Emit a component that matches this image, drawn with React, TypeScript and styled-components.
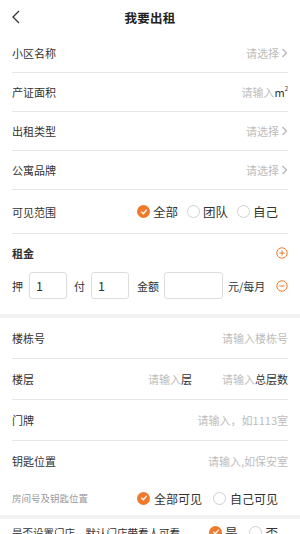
import React, { useState } from 'react';
import styled, { createGlobalStyle } from 'styled-components';

const GlobalStyle = createGlobalStyle`
    html, body {
        margin: 0;
        padding: 0;
        background: #ffffff;
    }
    body {
        font-family: "Noto Sans CJK SC", "Noto Sans", sans-serif;
        color: #333333;
    }
`;

const ORANGE = '#f07a2c';

const Page = styled.div`
    width: 300px;
    height: 534px;
    overflow: hidden;
    background: #ffffff;
`;

const Header = styled.div`
    height: 34px;
    display: flex;
    align-items: center;
    justify-content: center;
    position: relative;
`;

const BackButton = styled.div`
    position: absolute;
    left: 12px;
    top: 9px;
    width: 10px;
    height: 15px;
    display: flex;
    align-items: center;
`;

const Title = styled.h1`
    margin: 0;
    font-size: 12.5px;
    font-weight: 700;
    color: #222222;
    letter-spacing: 0.2px;
`;

const Section = styled.div`
    padding: 0 12px;
`;

const Row = styled.div<{ h?: number; noLine?: boolean }>`
    height: ${(p) => p.h ?? 38}px;
    display: flex;
    align-items: center;
    justify-content: space-between;
    border-bottom: ${(p) => (p.noLine ? 'none' : '1px solid #e6e6e6')};
`;

const Label = styled.span<{ bold?: boolean }>`
    font-size: 11px;
    color: #333333;
    font-weight: ${(p) => (p.bold ? 700 : 400)};
`;

const SubLabel = styled.span<{ dark?: boolean }>`
    font-size: ${(p) => (p.dark ? 10.5 : 9.5)}px;
    color: ${(p) => (p.dark ? '#333333' : '#999999')};
`;

const Value = styled.span`
    display: flex;
    align-items: center;
    font-size: 11px;
    color: #bdbdbd;
`;

const Dark = styled.span`
    color: #333333;
`;

const Sup = styled.sup`
    font-size: 6px;
    position: relative;
    top: -1px;
`;

const Split = styled.div`
    display: flex;
    gap: 30px;
`;

const Chevron = () => (
    <svg width="7" height="10" viewBox="0 0 7 10" style={{ marginLeft: 2 }}>
        <polyline points="1.5,1 5.5,5 1.5,9" fill="none" stroke="#b5b5b5" strokeWidth="1.2" />
    </svg>
);

const RadioGroup = styled.div<{ gap: number }>`
    display: flex;
    align-items: center;
    gap: ${(p) => p.gap}px;
    margin-right: 10px;
`;

const RadioItem = styled.label<{ size: number; space: number }>`
    display: flex;
    align-items: center;
    gap: ${(p) => p.space}px;
    font-size: ${(p) => p.size}px;
    color: #333333;
`;

const Dot = styled.span<{ on: boolean; d: number }>`
    width: ${(p) => p.d}px;
    height: ${(p) => p.d}px;
    box-sizing: border-box;
    border-radius: 50%;
    display: flex;
    align-items: center;
    justify-content: center;
    background: ${(p) => (p.on ? ORANGE : '#ffffff')};
    border: ${(p) => (p.on ? 'none' : '1px solid #cfcfcf')};
`;

const Radio = ({ on, text, d = 13, size = 12.5, space = 3 }: { on: boolean; text: string; d?: number; size?: number; space?: number }) => (
    <RadioItem size={size} space={space}>
        <Dot on={on} d={d}>
            {on && (
                <svg width={d * 0.6} height={d * 0.6} viewBox="0 0 10 10">
                    <polyline points="2,5.2 4.3,7.4 8.2,2.8" fill="none" stroke="#fff" strokeWidth="1.6" strokeLinecap="round" strokeLinejoin="round" />
                </svg>
            )}
        </Dot>
        {text}
    </RadioItem>
);

const CircleIcon = ({ plus }: { plus?: boolean }) => (
    <svg width="12" height="12" viewBox="0 0 12 12">
        <circle cx="6" cy="6" r="5.2" fill="none" stroke={ORANGE} strokeWidth="1" />
        <line x1="3.4" y1="6" x2="8.6" y2="6" stroke={ORANGE} strokeWidth="1" />
        {plus && <line x1="6" y1="3.4" x2="6" y2="8.6" stroke={ORANGE} strokeWidth="1" />}
    </svg>
);

const RentBlock = styled.div`
    padding: 0 12px 15px;
`;

const RentHead = styled.div`
    height: 38px;
    display: flex;
    align-items: center;
    justify-content: space-between;
`;

const RentLine = styled.div`
    display: flex;
    align-items: center;
    height: 27px;
`;

const Small = styled.span<{ ml?: number }>`
    font-size: 11px;
    color: #333333;
    margin-left: ${(p) => p.ml ?? 0}px;
`;

const Box = styled.div<{ w: number; ml: number }>`
    width: ${(p) => p.w}px;
    height: 27px;
    margin-left: ${(p) => p.ml}px;
    box-sizing: border-box;
    border: 1px solid #dedede;
    border-radius: 3px;
    font-size: 12.5px;
    color: #333333;
    display: flex;
    align-items: center;
    padding-left: 6px;
`;

const Spacer = styled.div`
    flex: 1;
`;

const Gap = styled.div`
    height: 4px;
    background: #f2f2f2;
`;

const KeyBlock = styled.div`
    padding: 0 12px;
`;

const KeyHead = styled.div`
    height: 40px;
    display: flex;
    align-items: center;
    justify-content: space-between;
`;

const KeyOpts = styled.div`
    height: 34px;
    display: flex;
    align-items: center;
    justify-content: space-between;
`;

const App: React.FC = () => {
    const [scope, setScope] = useState('全部');
    const [keyScope, setKeyScope] = useState('全部可见');

    return (
        <Page>
            <GlobalStyle />
            <Header>
                <BackButton>
                    <svg width="8" height="14" viewBox="0 0 8 14">
                        <polyline points="7,1 1,7 7,13" fill="none" stroke="#333" strokeWidth="1.3" />
                    </svg>
                </BackButton>
                <Title>我要出租</Title>
            </Header>

            <Section>
                <Row>
                    <Label>小区名称</Label>
                    <Value>请选择<Chevron /></Value>
                </Row>
                <Row>
                    <Label>产证面积</Label>
                    <Value>请输入<Dark>m<Sup>2</Sup></Dark></Value>
                </Row>
                <Row>
                    <Label>出租类型</Label>
                    <Value>请选择<Chevron /></Value>
                </Row>
                <Row>
                    <Label>公寓品牌</Label>
                    <Value>请选择<Chevron /></Value>
                </Row>
                <Row h={43}>
                    <Label>可见范围</Label>
                    <RadioGroup gap={9}>
                        {['全部', '团队', '自己'].map((s) => (
                            <span key={s} onClick={() => setScope(s)}>
                                <Radio on={scope === s} text={s} />
                            </span>
                        ))}
                    </RadioGroup>
                </Row>
            </Section>

            <RentBlock>
                <RentHead>
                    <Label bold>租金</Label>
                    <CircleIcon plus />
                </RentHead>
                <RentLine>
                    <Small>押</Small>
                    <Box w={38} ml={6}>1</Box>
                    <Small ml={7}>付</Small>
                    <Box w={38} ml={6}>1</Box>
                    <Small ml={8}>金额</Small>
                    <Box w={59} ml={5} />
                    <Small ml={5}>元/每月</Small>
                    <Spacer />
                    <CircleIcon />
                </RentLine>
            </RentBlock>

            <Gap />

            <Section>
                <Row h={40}>
                    <Label>楼栋号</Label>
                    <Value>请输入楼栋号</Value>
                </Row>
                <Row h={40}>
                    <Label>楼层</Label>
                    <Split>
                        <Value>请输入<Dark>层</Dark></Value>
                        <Value>请输入<Dark>总层数</Dark></Value>
                    </Split>
                </Row>
                <Row h={40}>
                    <Label>门牌</Label>
                    <Value>请输入，如1113室</Value>
                </Row>
            </Section>

            <KeyBlock>
                <KeyHead>
                    <Label>钥匙位置</Label>
                    <Value>请输入,如保安室</Value>
                </KeyHead>
                <KeyOpts>
                    <SubLabel>房间号及钥匙位置</SubLabel>
                    <RadioGroup gap={11}>
                        {['全部可见', '自己可见'].map((s) => (
                            <span key={s} onClick={() => setKeyScope(s)}>
                                <Radio on={keyScope === s} text={s} size={12} space={4} />
                            </span>
                        ))}
                    </RadioGroup>
                </KeyOpts>
            </KeyBlock>

            <Gap />

            <Section>
                <Row h={26} noLine>
                    <SubLabel dark>是否设置门店，默认门店带看人可看</SubLabel>
                    <RadioGroup gap={12}>
                        <Radio on text="是" />
                        <Radio on={false} text="否" />
                    </RadioGroup>
                </Row>
            </Section>
        </Page>
    );
};

export default App;
